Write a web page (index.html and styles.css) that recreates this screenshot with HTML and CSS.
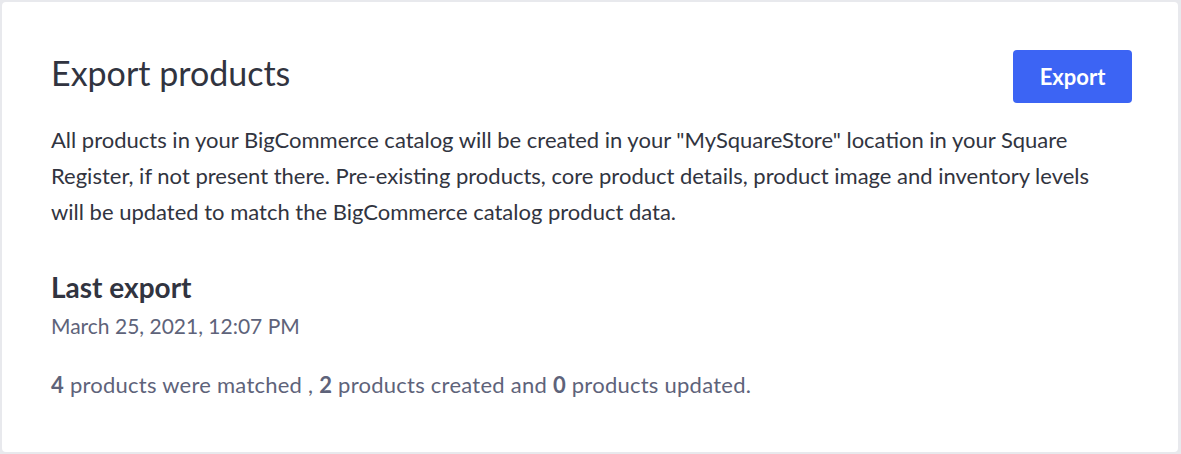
FILE: index.html
```html
<!DOCTYPE html>
<html>
<head>
<meta charset="utf-8">
<link rel="stylesheet" href="styles.css">
</head>
<body>
<div class="card">
  <div class="header">
    <h1 class="title">Export products</h1>
    <button class="btn">Export</button>
  </div>
  <p class="desc">All products in your BigCommerce catalog will be created in your "MySquareStore" location in your Square Register, if not present there. Pre-existing products, core product details, product image and inventory levels will be updated to match the BigCommerce catalog product data.</p>
  <h2 class="subtitle">Last export</h2>
  <div class="date">March 25, 2021, 12:07 PM</div>
  <div class="summary"><b>4</b> products were matched , <b>2</b> products created and <b>0</b> products updated.</div>
</div>
</body>
</html>
```
FILE: styles.css
```css
html, body { margin: 0; padding: 0; }
body {
  background: #e8e9ed;
  width: 1181px;
  height: 454px;
  padding: 2px 3px 2px 2px;
  box-sizing: border-box;
  font-family: Lato, "Noto Sans", sans-serif;
  color: #313440;
}
.card {
  background: #fff;
  border-radius: 4px;
  height: 450px;
  box-sizing: border-box;
  padding: 48px 46px 0 49px;
}
.header {
  display: flex;
  justify-content: space-between;
  align-items: flex-start;
}
.title {
  margin: 3px 0 0 0;
  font-size: 34px;
  font-weight: 400;
  line-height: 40px;
  color: #313440;
}
.btn {
  width: 119px;
  height: 53px;
  background: #3c64f4;
  color: #fff;
  border: none;
  border-radius: 4px;
  font-family: inherit;
  font-size: 22px;
  font-weight: 700;
  cursor: pointer;
}
.desc {
  margin: 19px 0 0 0;
  max-width: 1065px;
  font-size: 22px;
  line-height: 36px;
}
.subtitle {
  margin: 40px 0 0 0;
  font-size: 28px;
  font-weight: 700;
  line-height: 34px;
}
.date {
  margin-top: 8px;
  font-size: 21px;
  line-height: 28px;
  color: #5e637a;
}
.summary {
  margin-top: 31px;
  font-size: 22px;
  line-height: 28px;
  letter-spacing: 0.25px;
  color: #5e637a;
}
.summary b { color: #5e637a; }
```
